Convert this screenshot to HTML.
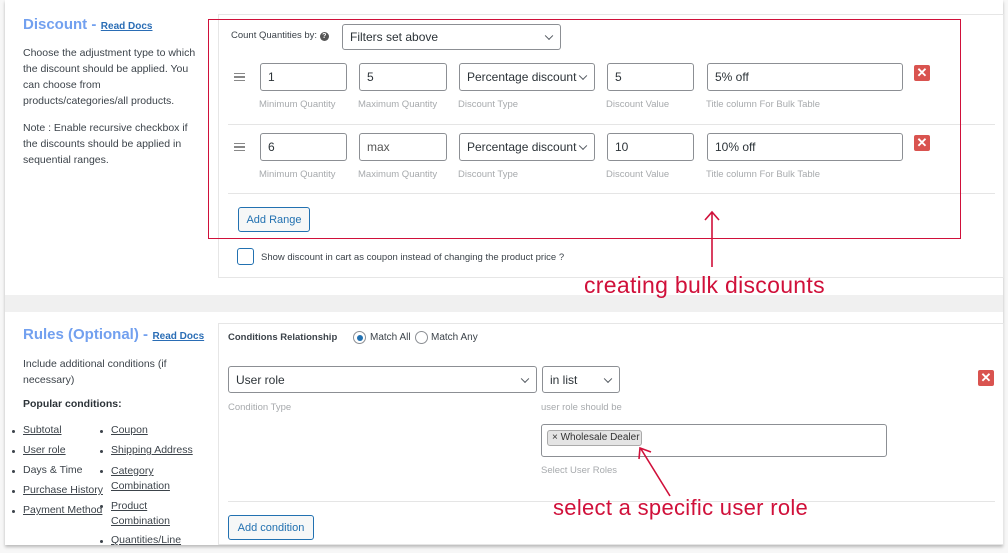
<!DOCTYPE html>
<html><head><meta charset="utf-8"><style>
*{margin:0;padding:0;box-sizing:border-box}
body{width:1008px;height:553px;background:#f7f7f7;font-family:"Liberation Sans",sans-serif;position:relative;overflow:hidden;color:#3c434a}
.a{position:absolute;white-space:nowrap}
.card{position:absolute;left:5px;top:0;width:998px;height:545px;background:#fff;box-shadow:0 2px 3px rgba(0,0,0,.25)}
.panel{position:absolute;background:#fff;border:1px solid #e6e6e6}
.in{position:absolute;border:1px solid #8c8f94;border-radius:3px;background:#fff;font-size:12px;color:#2c3338;padding-left:7px;display:flex;align-items:center}
.lbl{position:absolute;font-size:9.5px;color:#a7aaad;white-space:nowrap}
.chev{position:absolute;right:8px;top:50%;width:6px;height:6px;border-right:1.3px solid #50575e;border-bottom:1.3px solid #50575e;transform:translateY(-70%) rotate(45deg)}
.del{position:absolute;width:16px;height:16px;background:#d9534f;border-radius:2px;color:#fff;font-size:13px;font-weight:bold;text-align:center;line-height:16px}
.sep{position:absolute;height:1px;background:#e5e5e5}
.h{color:#72a0ef;font-size:15px;font-weight:bold}
.rd{color:#2a6db5;font-size:10px;font-weight:bold;text-decoration:underline}
.p{font-size:10.5px;color:#3c434a}
.u{text-decoration:underline}
.btn{position:absolute;border:1px solid #2271b1;border-radius:3px;background:#f6f7f7;color:#2271b1;font-size:11px;display:flex;align-items:center;justify-content:center}
.drag{position:absolute;width:11px;height:8px;border-top:1.5px solid #888;border-bottom:1.5px solid #888}
.drag:after{content:"";position:absolute;left:0;right:0;top:2px;height:1.5px;background:#888}
.note{position:absolute;color:#d0103a;font-size:23px;white-space:nowrap;letter-spacing:.3px}
.li{position:absolute;font-size:10.5px;color:#3c434a;white-space:nowrap}
.li:before{content:"";position:absolute;left:-11px;top:6px;width:3px;height:3px;border-radius:50%;background:#3c434a}
</style></head><body>
<div class="card"></div>
<div class="a" style="left:5px;top:295px;width:998px;height:17px;background:#f0f0f0"></div>

<div class="a" style="left:23px;top:16px"><span class="h">Discount -</span> <span class="rd">Read Docs</span></div>
<div class="a p" style="left:23px;top:45px;line-height:16px">Choose the adjustment type to which<br>the discount should be applied. You<br>can choose from<br>products/categories/all products.</div>
<div class="a p" style="left:23px;top:120px;line-height:16px">Note : Enable recursive checkbox if<br>the discounts should be applied in<br>sequential ranges.</div>

<div class="panel" style="left:218px;top:14px;width:786px;height:264px"></div>
<div class="a" style="left:231px;top:30px;font-size:9.5px;color:#3c434a">Count Quantities by: <span style="display:inline-block;width:9px;height:9px;border-radius:50%;background:#555;color:#fff;font-size:7px;text-align:center;line-height:9px;font-weight:bold">?</span></div>
<div class="in" style="left:342px;top:24px;width:219px;height:26px">Filters set above<span class="chev"></span></div>

<div class="drag" style="left:234px;top:73px"></div>
<div class="in" style="left:260px;top:63px;width:87px;height:28px">1</div>
<div class="in" style="left:359px;top:63px;width:88px;height:28px">5</div>
<div class="in" style="left:459px;top:63px;width:136px;height:28px">Percentage discount<span class="chev"></span></div>
<div class="in" style="left:607px;top:63px;width:87px;height:28px">5</div>
<div class="in" style="left:707px;top:63px;width:196px;height:28px">5% off</div>
<div class="del" style="left:914px;top:65px">✕</div>
<div class="lbl" style="left:259px;top:99px">Minimum Quantity</div>
<div class="lbl" style="left:358px;top:99px">Maximum Quantity</div>
<div class="lbl" style="left:458px;top:99px">Discount Type</div>
<div class="lbl" style="left:606px;top:99px">Discount Value</div>
<div class="lbl" style="left:706px;top:99px">Title column For Bulk Table</div>
<div class="sep" style="left:228px;top:124px;width:767px"></div>

<div class="drag" style="left:234px;top:143px"></div>
<div class="in" style="left:260px;top:133px;width:87px;height:28px">6</div>
<div class="in" style="left:359px;top:133px;width:88px;height:28px;color:#555">max</div>
<div class="in" style="left:459px;top:133px;width:136px;height:28px">Percentage discount<span class="chev"></span></div>
<div class="in" style="left:607px;top:133px;width:87px;height:28px">10</div>
<div class="in" style="left:707px;top:133px;width:196px;height:28px">10% off</div>
<div class="del" style="left:914px;top:135px">✕</div>
<div class="lbl" style="left:259px;top:169px">Minimum Quantity</div>
<div class="lbl" style="left:358px;top:169px">Maximum Quantity</div>
<div class="lbl" style="left:458px;top:169px">Discount Type</div>
<div class="lbl" style="left:606px;top:169px">Discount Value</div>
<div class="lbl" style="left:706px;top:169px">Title column For Bulk Table</div>
<div class="sep" style="left:228px;top:193px;width:767px"></div>

<div class="btn" style="left:238px;top:207px;width:72px;height:25px">Add Range</div>
<div class="a" style="left:237px;top:248px;width:17px;height:17px;border:1px solid #2271b1;border-radius:3px"></div>
<div class="a" style="left:261px;top:252px;font-size:9.5px;color:#3c434a">Show discount in cart as coupon instead of changing the product price ?</div>

<div class="a" style="left:208px;top:19px;width:753px;height:220px;border:1.5px solid #d0103a"></div>
<svg class="a" style="left:700px;top:205px" width="24" height="64"><path d="M12 62V8M5 15L12 7L19 15" stroke="#d0103a" stroke-width="1.6" fill="none"/></svg>
<div class="note" style="left:584px;top:272px">creating bulk discounts</div>

<div class="a" style="left:23px;top:326px"><span class="h">Rules (Optional) -</span> <span class="rd">Read Docs</span></div>
<div class="a p" style="left:23px;top:356px;line-height:16px">Include additional conditions (if<br>necessary)</div>
<div class="a" style="left:23px;top:398px;font-size:10.5px;font-weight:bold;color:#2c3338">Popular conditions:</div>
<div class="li u" style="left:23px;top:424px">Subtotal</div>
<div class="li u" style="left:23px;top:444px">User role</div>
<div class="li" style="left:23px;top:464px">Days &amp; Time</div>
<div class="li u" style="left:23px;top:484px">Purchase History</div>
<div class="li u" style="left:23px;top:504px">Payment Method</div>
<div class="li u" style="left:111px;top:424px">Coupon</div>
<div class="li u" style="left:111px;top:444px">Shipping Address</div>
<div class="li u" style="left:111px;top:464px;line-height:15px">Category<br>Combination</div>
<div class="li u" style="left:111px;top:499px;line-height:15px">Product<br>Combination</div>
<div class="li u" style="left:111px;top:534px">Quantities/Line</div>

<div class="panel" style="left:218px;top:323px;width:786px;height:222px"></div>
<div class="a" style="left:228px;top:332px;font-size:9.5px;font-weight:bold;color:#3c434a">Conditions Relationship</div>
<div class="a" style="left:353px;top:331px;width:13px;height:13px;border:1px solid #8c8f94;border-radius:50%"><div style="position:absolute;left:2.5px;top:2.5px;width:6px;height:6px;border-radius:50%;background:#2271b1"></div></div>
<div class="a" style="left:370px;top:332px;font-size:10px">Match All</div>
<div class="a" style="left:415px;top:331px;width:13px;height:13px;border:1px solid #8c8f94;border-radius:50%"></div>
<div class="a" style="left:431px;top:332px;font-size:10px">Match Any</div>

<div class="in" style="left:228px;top:366px;width:309px;height:27px">User role<span class="chev"></span></div>
<div class="in" style="left:542px;top:366px;width:78px;height:27px">in list<span class="chev"></span></div>
<div class="del" style="left:978px;top:370px">✕</div>
<div class="lbl" style="left:228px;top:402px">Condition Type</div>
<div class="lbl" style="left:541px;top:402px">user role should be</div>
<div class="a" style="left:541px;top:424px;width:346px;height:33px;border:1px solid #8c8f94;border-radius:3px"></div>
<div class="a" style="left:547px;top:430px;width:95px;height:16px;background:#e4e4e4;border:1px solid #aaa;border-radius:3px;font-size:10px;color:#333;line-height:14px;padding-left:4px">× Wholesale Dealer</div>
<div class="lbl" style="left:541px;top:465px">Select User Roles</div>
<div class="sep" style="left:228px;top:501px;width:767px"></div>
<div class="btn" style="left:228px;top:515px;width:86px;height:25px">Add condition</div>

<svg class="a" style="left:634px;top:444px" width="42" height="54"><path d="M36 52L7 5M5 15L6 4L17 8" stroke="#d0103a" stroke-width="1.6" fill="none"/></svg>
<div class="note" style="left:553px;top:495px;font-size:22px">select a specific user role</div>
</body></html>
